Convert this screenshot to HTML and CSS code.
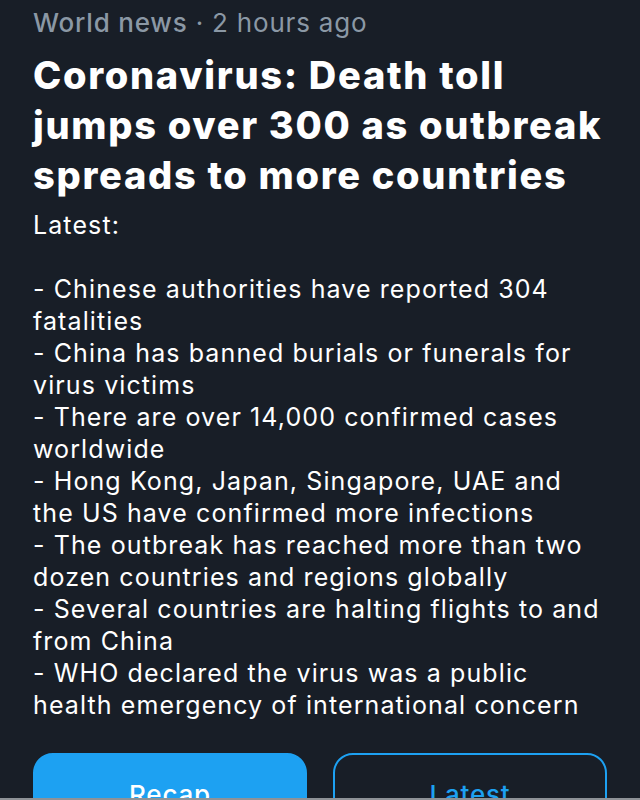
FILE: index.html
```html
<!DOCTYPE html>
<html>
<head>
<meta charset="utf-8">
<link rel="stylesheet" href="styles.css">
</head>
<body>
<main class="card">
  <div class="meta"><span class="source">World news</span> · 2 hours ago</div>
  <h1 class="title">Coronavirus: Death toll<br>jumps over 300 as outbreak<br>spreads to more countries</h1>
  <p class="body">Latest:<br><br>- Chinese authorities have reported 304<br>fatalities<br>- China has banned burials or funerals for<br>virus victims<br>- There are over 14,000 confirmed cases<br>worldwide<br>- Hong Kong, Japan, Singapore, UAE and<br>the US have confirmed more infections<br>- The outbreak has reached more than two<br>dozen countries and regions globally<br>- Several countries are halting flights to and<br>from China<br>- WHO declared the virus was a public<br>health emergency of international concern</p>
  <div class="actions">
    <button class="btn btn-primary">Recap</button>
    <button class="btn btn-outline">Latest</button>
  </div>
</main>
<div class="bottom-edge"></div>
</body>
</html>
```

FILE: styles.css
```css
html, body {
  margin: 0;
  padding: 0;
  background: #181e27;
  height: 800px;
  overflow: hidden;
}
.card {
  padding: 6px 33px 0 33px;
  font-family: "Inter", "Roboto", "Liberation Sans", sans-serif;
  color: #ffffff;
}
.meta {
  font-size: 26px;
  line-height: 34px;
  letter-spacing: 0.8px;
  color: #8b98a5;
  white-space: nowrap;
}
.source {
  font-weight: 500;
}
.title {
  margin: 10px 0 0 0;
  font-weight: 800;
  font-size: 38px;
  line-height: 50px;
  letter-spacing: 1.7px;
  white-space: nowrap;
}
.body {
  margin: 9px 0 0 0;
  font-size: 25px;
  line-height: 32px;
  letter-spacing: 1.1px;
  font-weight: 400;
  white-space: nowrap;
}
.actions {
  margin-top: 32px;
  display: flex;
  gap: 26px;
}
.btn {
  flex: 0 0 274px;
  height: 74px;
  border-radius: 20px;
  border: 2px solid #1da1f2;
  font-family: "Inter", "Roboto", sans-serif;
  font-size: 26px;
  font-weight: 500;
  letter-spacing: 0.8px;
  padding: 8px 0 0 0;
  box-sizing: border-box;
}
.btn-primary {
  background: #1da1f2;
  color: #ffffff;
}
.btn-outline {
  background: transparent;
  color: #1da1f2;
}
.bottom-edge {
  position: fixed;
  left: 0;
  right: 0;
  bottom: 0;
  height: 2px;
  background: #8e9297;
}
```
